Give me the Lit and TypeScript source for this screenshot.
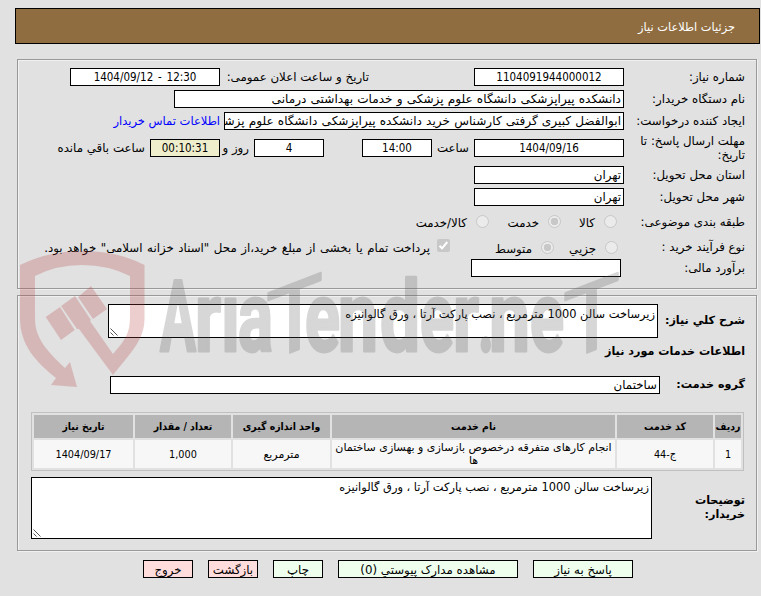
import { LitElement, html, svg, css } from 'lit';
import { customElement } from 'lit/decorators.js';

const HEADS = ['ردیف', 'کد خدمت', 'نام خدمت', 'واحد اندازه گیری', 'تعداد / مقدار', 'تاریخ نیاز'];
const CELLS = ['1', 'ج-44', 'انجام کارهای متفرقه درخصوص بازسازی و بهسازی ساختمان ها', 'مترمربع', '1,000', '1404/09/17'];
const DESCRIPTION = 'زیرساخت سالن 1000 مترمربع ، نصب پارکت آرتا ، ورق گالوانیزه';

// letter, left edge, width
const MARK: [string, number, number][] = [
  ['A', 160, 36], ['r', 195, 26], ['ı', 221, 19], ['a', 238, 35],
  ['e', 305, 35], ['n', 338, 40], ['d', 380, 40], ['e', 420, 34],
  ['r', 453, 26], ['.', 478, 16], ['n', 489, 41], ['e', 530, 34],
];

@customElement('brand-mark')
export class BrandMark extends LitElement {
  static styles = css`
    :host {
      position: absolute;
      inset: 0;
      direction: ltr;
      pointer-events: none;
    }
    svg {
      display: block;
    }
    .word {
      font: 700 99px Roboto, sans-serif;
      fill: #555;
      stroke: #555;
      stroke-width: 3px;
      stroke-linejoin: round;
    }
    .tall {
      font-size: 96px;
      font-weight: 400;
      stroke-width: 2px;
    }
  `;

  render() {
    return html`
      <svg width="761" height="596" viewBox="0 0 761 596">
        <path
          fill="#b54145"
          opacity="0.26"
          d="M20 265Q48 251 82 251Q118 251 144.500 265V316C145 338 135 348 113 375L79 329L77 329L61 306L75 296L91 320L90 321L113 354C126 339 130 333 130 316V276Q108 265 82 265Q56 265 35 276V318C35 338 46 350 65 368L70 362L77 387L51 385L56 378C36 362 20 345 20 318ZM45.700 317L60 307L74.700 330L61 340ZM78 297L91 286L107 309L93 319Z"
        />
        <g class="word" opacity="0.23">
          ${MARK.map(([letter, x, w]) => svg`
            <text x=${x} y="351" textLength=${w} lengthAdjust="spacingAndGlyphs">${letter}</text>
          `)}
          <text class="tall" transform="translate(266 362) skewY(-21)" textLength="57" lengthAdjust="spacingAndGlyphs">T</text>
          <text class="tall" transform="translate(563 362) skewY(-21)" textLength="57" lengthAdjust="spacingAndGlyphs">T</text>
        </g>
      </svg>
    `;
  }
}

@customElement('app-root')
export class AppRoot extends LitElement {
  static styles = css`
    :host {
      display: block;
      position: relative;
      direction: rtl;
      width: 761px;
      height: 596px;
      overflow: hidden;
      box-sizing: border-box;
      padding: 8px 1px 0 0;
      background: #e1e1e1;
      color: #000;
      font: 11.8px/14px 'DejaVu Sans', sans-serif;
    }
    * {
      box-sizing: border-box;
    }
    .header {
      width: 745px;
      height: 36px;
      padding: 0 24px;
      border: 1px solid #000;
      background: #8f6d40;
      color: #fff;
      font-size: 11.4px;
      line-height: 36px;
    }
    .panel {
      width: 740px;
      margin-right: 3px;
      padding: 6px 11px 0 0;
      border: 1px solid #999;
      box-shadow: 1px 1px 0 #f1f1f1, inset 1px 1px 0 #f1f1f1;
    }
    .request {
      height: 230px;
      margin-top: 15px;
    }
    .need {
      height: 256px;
      margin-top: 6px;
      padding-top: 8px;
    }
    .row {
      display: grid;
      height: 22px;
      align-items: center;
      white-space: nowrap;
    }
    .row.number { grid-template-columns: 121px 150px 105px 149px 150px; }
    .row.agency { grid-template-columns: 121px 450px; }
    .row.creator { grid-template-columns: 121px 400px auto; }
    .row.deadline {
      grid-template-columns: 121px 150px 42px 70px 108px 34px 70px auto;
      height: 32px;
    }
    .row.place { grid-template-columns: 121px 150px; }
    .row.kind {
      grid-template-columns: 128px 13px 43px 13px 59px 13px auto;
      height: 27px;
    }
    .row.process {
      grid-template-columns: 127px 13px 51px 13px 91px 13px auto;
      padding-top: 2px;
    }
    .row.estimate { grid-template-columns: 124px 150px; }
    .row.summary {
      grid-template-columns: 87px 550px;
      height: 34px;
    }
    .row.group {
      grid-template-columns: 85px 550px;
      height: 18px;
      margin-top: 17px;
    }
    .row.notes {
      grid-template-columns: 93px 621px;
      height: 62px;
      margin-top: 6px;
    }
    .wrap {
      white-space: normal;
      width: 112px;
    }
    .notes .wrap {
      width: 60px;
    }
    .after {
      padding-right: 5px;
    }
    .option {
      padding: 3px 9px 0 0;
    }
    .long {
      word-spacing: 0.8px;
      padding: 1px 7px 0 0;
    }
    .box {
      height: 18px;
      padding: 0 2px;
      border: 1px solid #000;
      background: #fff;
      line-height: 17px;
      overflow: hidden;
      white-space: nowrap;
    }
    .agency .box,
    .creator .box {
      font-size: 12.1px;
      word-spacing: 0.3px;
    }
    .digits {
      font-family: 'DejaVu Sans Condensed', 'DejaVu Sans', sans-serif;
      font-size: 11.5px;
      text-align: center;
    }
    .ltr {
      direction: ltr;
      word-spacing: 1.5px;
    }
    .short {
      justify-self: end;
      width: 70px;
    }
    .timer {
      background: #eeeecc;
    }
    .link {
      padding-right: 4px;
      color: #00f;
      font-size: 11.5px;
    }
    .radio {
      width: 13px;
      height: 13px;
      border: 1px solid #c8c8c8;
      border-radius: 50%;
      background: #ebebeb;
    }
    .radio.on {
      background: radial-gradient(circle, #c8c8c8 3.5px, #ebebeb 4px);
    }
    .check {
      width: 13px;
      height: 13px;
      margin-bottom: 3px;
      border-radius: 2px;
      background: #c8c8c8;
    }
    .check svg {
      display: block;
    }
    .area {
      position: relative;
      height: 100%;
      padding: 3px 2px;
      border: 1px solid #000;
      background: #fff;
      font-size: 11.4px;
      line-height: 13px;
    }
    .grip {
      position: absolute;
      left: 1px;
      bottom: 1px;
    }
    .bold {
      font-size: 11.2px;
      font-weight: bold;
    }
    .title {
      height: 14px;
      margin-top: 7px;
      font-size: 11.2px;
      font-weight: bold;
    }
    .table {
      display: grid;
      grid-template-columns: 26px 96px 283px 97px 96px 99px;
      grid-template-rows: 23px 28px;
      gap: 2px;
      width: 713px;
      margin: 18px 1px 0 0;
      padding: 2px;
      border: 1px solid #c0c0c0;
      font-size: 11px;
      line-height: 13px;
      text-align: center;
    }
    .cell {
      display: flex;
      align-items: center;
      justify-content: center;
      background: #f7f7f7;
    }
    .cell.head,
    .cell.figure {
      font-family: 'DejaVu Sans Condensed', 'DejaVu Sans', sans-serif;
      font-size: 10.8px;
      white-space: nowrap;
    }
    .cell.head {
      background: #b5b5b5;
      font-size: 10.4px;
      font-weight: bold;
    }
    .buttons {
      display: flex;
      gap: 15px;
      margin: 9px 127px 0 0;
    }
    .button {
      width: 50px;
      height: 18px;
      border: 1px solid #000;
      background: #eeffee;
      line-height: 18px;
      text-align: center;
      white-space: nowrap;
    }
    .button.reply { width: 100px; }
    .button.files { width: 180px; }
    .button.red { background: #ffdddd; }
  `;

  render() {
    return html`
      <div class="header">جزئیات اطلاعات نیاز</div>
      <div class="panel request">
        <div class="row number">
          <span>شماره نیاز:</span>
          <div class="box digits">1104091944000012</div>
          <span></span>
          <span>تاریخ و ساعت اعلان عمومی:</span>
          <div class="box digits ltr">1404/09/12 - 12:30</div>
        </div>
        <div class="row agency">
          <span>نام دستگاه خریدار:</span>
          <div class="box">دانشکده پیراپزشکی دانشگاه علوم پزشکی و خدمات بهداشتی درمانی</div>
        </div>
        <div class="row creator">
          <span>ایجاد کننده درخواست:</span>
          <div class="box">ابوالفضل کبیری گرفتی کارشناس خرید دانشکده پیراپزشکی دانشگاه علوم پزشکی</div>
          <span class="link">اطلاعات تماس خریدار</span>
        </div>
        <div class="row deadline">
          <span class="wrap">مهلت ارسال پاسخ: تا تاریخ:</span>
          <div class="box digits">1404/09/16</div>
          <span class="after">ساعت</span>
          <div class="box digits">14:00</div>
          <div class="box digits short">4</div>
          <span class="after">روز و</span>
          <div class="box digits timer">00:10:31</div>
          <span class="after">ساعت باقي مانده</span>
        </div>
        <div class="row place">
          <span>استان محل تحویل:</span>
          <div class="box">تهران</div>
        </div>
        <div class="row place">
          <span>شهر محل تحویل:</span>
          <div class="box">تهران</div>
        </div>
        <div class="row kind">
          <span>طبقه بندی موضوعی:</span>
          <span class="radio"></span><span class="option">کالا</span>
          <span class="radio on"></span><span class="option">خدمت</span>
          <span class="radio"></span><span class="option">کالا/خدمت</span>
        </div>
        <div class="row process">
          <span>نوع فرآیند خرید :</span>
          <span class="radio"></span><span class="option">جزیي</span>
          <span class="radio on"></span><span class="option">متوسط</span>
          <span class="check">
            <svg width="13" height="13" viewBox="0 0 13 13">
              <path d="M2.5 6.8L5 9.3L10.3 3" fill="none" stroke="#fff" stroke-width="2" />
            </svg>
          </span>
          <span class="long">پرداخت تمام یا بخشی از مبلغ خرید،از محل "اسناد خزانه اسلامی" خواهد بود.</span>
        </div>
        <div class="row estimate">
          <span>برآورد مالی:</span>
          <div class="box"></div>
        </div>
      </div>
      <div class="panel need">
        <div class="row summary">
          <span class="bold">شرح کلي نیاز:</span>
          <div class="area">${DESCRIPTION}${this._grip()}</div>
        </div>
        <div class="title">اطلاعات خدمات مورد نیاز</div>
        <div class="row group">
          <span class="bold">گروه خدمت:</span>
          <div class="box">ساختمان</div>
        </div>
        <div class="table">
          ${HEADS.map((head) => html`<div class="cell head">${head}</div>`)}
          ${CELLS.map((cell) => html`<div class="cell ${/\d/.test(cell) ? 'figure' : ''}">${cell}</div>`)}
        </div>
        <div class="row notes">
          <span class="bold wrap">توضیحات خریدار:</span>
          <div class="area">${DESCRIPTION}${this._grip()}</div>
        </div>
      </div>
      <div class="buttons">
        <div class="button reply">پاسخ به نیاز</div>
        <div class="button files">مشاهده مدارک پیوستي (0)</div>
        <div class="button">چاپ</div>
        <div class="button red">بازگشت</div>
        <div class="button red">خروج</div>
      </div>
      <brand-mark></brand-mark>
    `;
  }

  private _grip() {
    return html`
      <svg class="grip" width="8" height="8" viewBox="0 0 8 8">
        <path d="M0.5 0.5L7.5 7.5M0.5 4.5L3.5 7.5" stroke="#555" fill="none" />
      </svg>
    `;
  }
}
